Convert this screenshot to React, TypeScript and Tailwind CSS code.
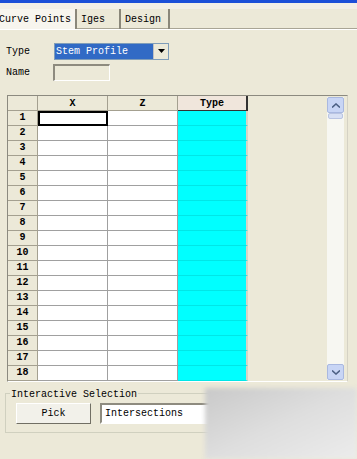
import React from "react";

const rows = Array.from({ length: 18 }, (_, i) => i + 1);

function Tab({ label, active, w }: { label: string; active?: boolean; w: string }) {
  return (
    <div
      className={`${w} h-[20px] flex items-center pl-[2px] border-r-2 border-[#8a877a] ${
        active ? "bg-[#f7f5ee]" : ""
      }`}
    >
      {label}
    </div>
  );
}

export default function App() {
  return (
    <div className="relative w-[357px] h-[459px] bg-[#ece9d8] overflow-hidden text-[10px] text-black [font-family:'Liberation_Mono',monospace]">
      <div className="h-[3px] bg-[#1c4fd8]" />
      <div className="h-[6px] bg-[#f3efe7]" />

      {/* tabs */}
      <div className="flex h-[20px] -ml-[3px] border-b border-[#a9a595]">
        <Tab label="Curve Points" active w="w-[80px]" />
        <Tab label="Iges" w="w-[44px] pl-[4px]" />
        <Tab label="Design" w="w-[49px] pl-[4px]" />
      </div>
      <div className="h-[1px] bg-white" />

      {/* type / name */}
      <div className="flex items-center h-[18px] mt-[12px] pl-[6px]">
        <span className="w-[48px]">Type</span>
        <div className="flex items-center w-[115px] h-[17px] bg-white border border-[#7f9db9]">
          <div className="flex-1 h-full bg-[#316ac5] text-white pl-[1px] leading-[15px]">Stem Profile</div>
          <div className="w-[15px] h-full flex items-center justify-center bg-[#ece9d8] border-l border-[#c0c0c0]">
            <svg width="7" height="4" viewBox="0 0 7 4">
              <path d="M0 0h7L3.5 4z" fill="#000" />
            </svg>
          </div>
        </div>
      </div>
      <div className="flex items-center h-[18px] mt-[3px] pl-[6px]">
        <span className="w-[47px]">Name</span>
        <div className="w-[57px] h-[17px] border-l-2 border-t-2 border-[#8e8b7f] border-r border-b border-r-white border-b-white bg-[#ece9d8]" />
      </div>

      {/* grid */}
      <div className="flex mt-[14px] ml-[7px] w-[341px] h-[287px] border border-[#8c8a80] border-r-[#d5d2c5] border-b-[#ffffff] bg-[#ece9d8]">
        <div className="flex-1">
          <div className="flex h-[15px] font-bold">
            <div className="w-[30px] bg-[#ece9d8] border-r border-b border-[#a4a090]" />
            <div className="w-[70px] text-center border-r border-b border-[#a4a090] bg-[#ece9d8]">X</div>
            <div className="w-[70px] text-center border-r border-b border-[#a4a090] bg-[#ece9d8]">Z</div>
            <div className="w-[70px] text-center border-r-2 border-b border-[#333] bg-[#f0e6dc]">Type</div>
          </div>
          {rows.map((r) => (
            <div key={r} className="flex h-[15px]">
              <div className="w-[30px] text-center font-bold leading-[14px] bg-[#ece9d8] border-r border-b border-[#a4a090]">
                {r}
              </div>
              <div
                className={`w-[70px] bg-white border-r border-b border-[#a0a0a0] ${
                  r === 1 ? "outline-2 -outline-offset-2 outline-black" : ""
                }`}
              />
              <div className="w-[70px] bg-white border-r border-b border-[#a0a0a0]" />
              <div className="w-[70px] bg-[#00ffff] border-r-2 border-[#d8d4c6] border-b border-b-[#00e6e6]" />
            </div>
          ))}
        </div>
        {/* scrollbar */}
        <div className="w-[17px] mr-[3px] my-[1px] flex flex-col bg-[#f7f7f2]">
          <div className="h-[16px] flex items-center justify-center bg-[#c8d5f5] border border-[#a9b8e0] rounded-[2px]">
            <svg width="8" height="5" viewBox="0 0 8 5">
              <path d="M0 4.5L4 1l4 3.5" fill="none" stroke="#4d6185" strokeWidth="1.6" />
            </svg>
          </div>
          <div className="h-[6px] mx-[1px] bg-[#d8e0f4] border border-[#b9c4e2] rounded-[2px]" />
          <div className="flex-1" />
          <div className="h-[16px] flex items-center justify-center bg-[#c8d5f5] border border-[#a9b8e0] rounded-[2px]">
            <svg width="8" height="5" viewBox="0 0 8 5">
              <path d="M0 0.5L4 4l4-3.5" fill="none" stroke="#4d6185" strokeWidth="1.6" />
            </svg>
          </div>
        </div>
      </div>

      {/* interactive selection */}
      <div className="relative mt-[11px] ml-[5px] w-[330px] h-[40px] border border-[#d0d0bf]">
        <span className="absolute -top-[7px] left-[4px] px-[1px] bg-[#ece9d8]">Interactive Selection</span>
        <div className="flex items-center gap-[9px] mt-[9px] ml-[10px]">
          <div className="w-[75px] h-[21px] flex items-center justify-center bg-[#f2f1ea] border border-white border-r-[#716f64] border-b-[#716f64]">
            Pick
          </div>
          <div className="w-[200px] h-[21px] flex items-center pl-[3px] bg-white border-2 border-[#8e8b7f] border-r-white border-b-white">
            Intersections
          </div>
        </div>
      </div>

      {/* watermark blur */}
      <div className="absolute left-[205px] top-[388px] w-[152px] h-[71px] bg-gradient-to-br from-[#c9c9c9] via-[#dedede] to-[#ececec] blur-[2px]" />
    </div>
  );
}
